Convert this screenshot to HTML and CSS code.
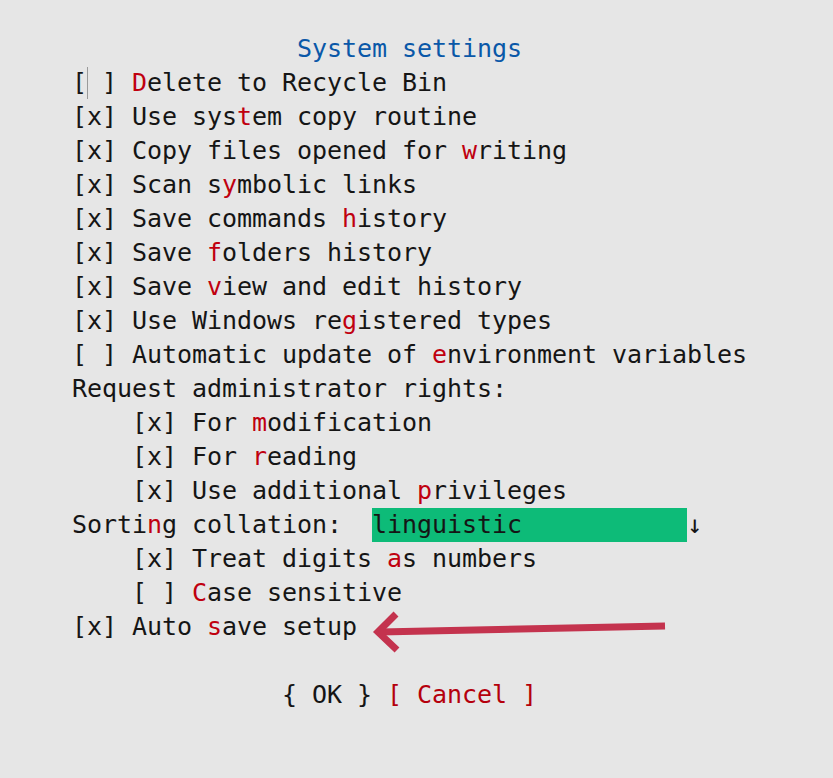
FILE: index.html
```html
<!DOCTYPE html>
<html>
<head>
<meta charset="utf-8">
<link rel="stylesheet" href="styles.css">
</head>
<body>
<div class="dialog">
  <div class="row title">               System settings</div>
  <div class="row">[<span class="cursor"></span> ] <span class="hk">D</span>elete to Recycle Bin</div>
  <div class="row">[x] Use sys<span class="hk">t</span>em copy routine</div>
  <div class="row">[x] Copy files opened for <span class="hk">w</span>riting</div>
  <div class="row">[x] Scan s<span class="hk">y</span>mbolic links</div>
  <div class="row">[x] Save commands <span class="hk">h</span>istory</div>
  <div class="row">[x] Save <span class="hk">f</span>olders history</div>
  <div class="row">[x] Save <span class="hk">v</span>iew and edit history</div>
  <div class="row">[x] Use Windows re<span class="hk">g</span>istered types</div>
  <div class="row">[ ] Automatic update of <span class="hk">e</span>nvironment variables</div>
  <div class="row">Request administrator rights:</div>
  <div class="row">    [x] For <span class="hk">m</span>odification</div>
  <div class="row">    [x] For <span class="hk">r</span>eading</div>
  <div class="row">    [x] Use additional <span class="hk">p</span>rivileges</div>
  <div class="row">Sorti<span class="hk">n</span>g collation:  <span class="combo">linguistic           </span>↓</div>
  <div class="row">    [x] Treat digits <span class="hk">a</span>s numbers</div>
  <div class="row">    [ ] <span class="hk">C</span>ase sensitive</div>
  <div class="row">[x] Auto <span class="hk">s</span>ave setup</div>
  <div class="row"> </div>
  <div class="row">              { OK } <span class="cancel">[ Cancel ]</span></div>
</div>
<svg class="annot" width="833" height="778" viewBox="0 0 833 778">
  <g stroke="#c4334e" stroke-width="7" fill="none" stroke-linecap="butt" stroke-linejoin="miter">
    <line x1="380" y1="632" x2="665" y2="626"/>
    <polyline points="396,614 378,632 397,650"/>
  </g>
</svg>
</body>
</html>
```

FILE: styles.css
```css
html, body {
  margin: 0;
  padding: 0;
  background: #e6e6e6;
}
body {
  width: 833px;
  height: 778px;
  position: relative;
  overflow: hidden;
}
.dialog {
  padding: 32px 0 0 72px;
  font-family: "DejaVu Sans Mono", monospace;
  font-size: 25px;
  letter-spacing: -0.05px;
  color: #151515;
}
.row {
  height: 34px;
  line-height: 34px;
  white-space: pre;
}
.title {
  color: #0a58a8;
}
.hk {
  color: #c0000f;
}
.cancel {
  color: #b5000c;
}
.combo {
  background: #0dbb78;
  display: inline-block;
  height: 34px;
  vertical-align: top;
}
.cursor {
  display: inline-block;
  width: 1px;
  height: 32px;
  margin-right: -1px;
  background: #9a9a9a;
  vertical-align: top;
  margin-top: 1px;
}
.annot {
  position: absolute;
  left: 0;
  top: 0;
}
```
